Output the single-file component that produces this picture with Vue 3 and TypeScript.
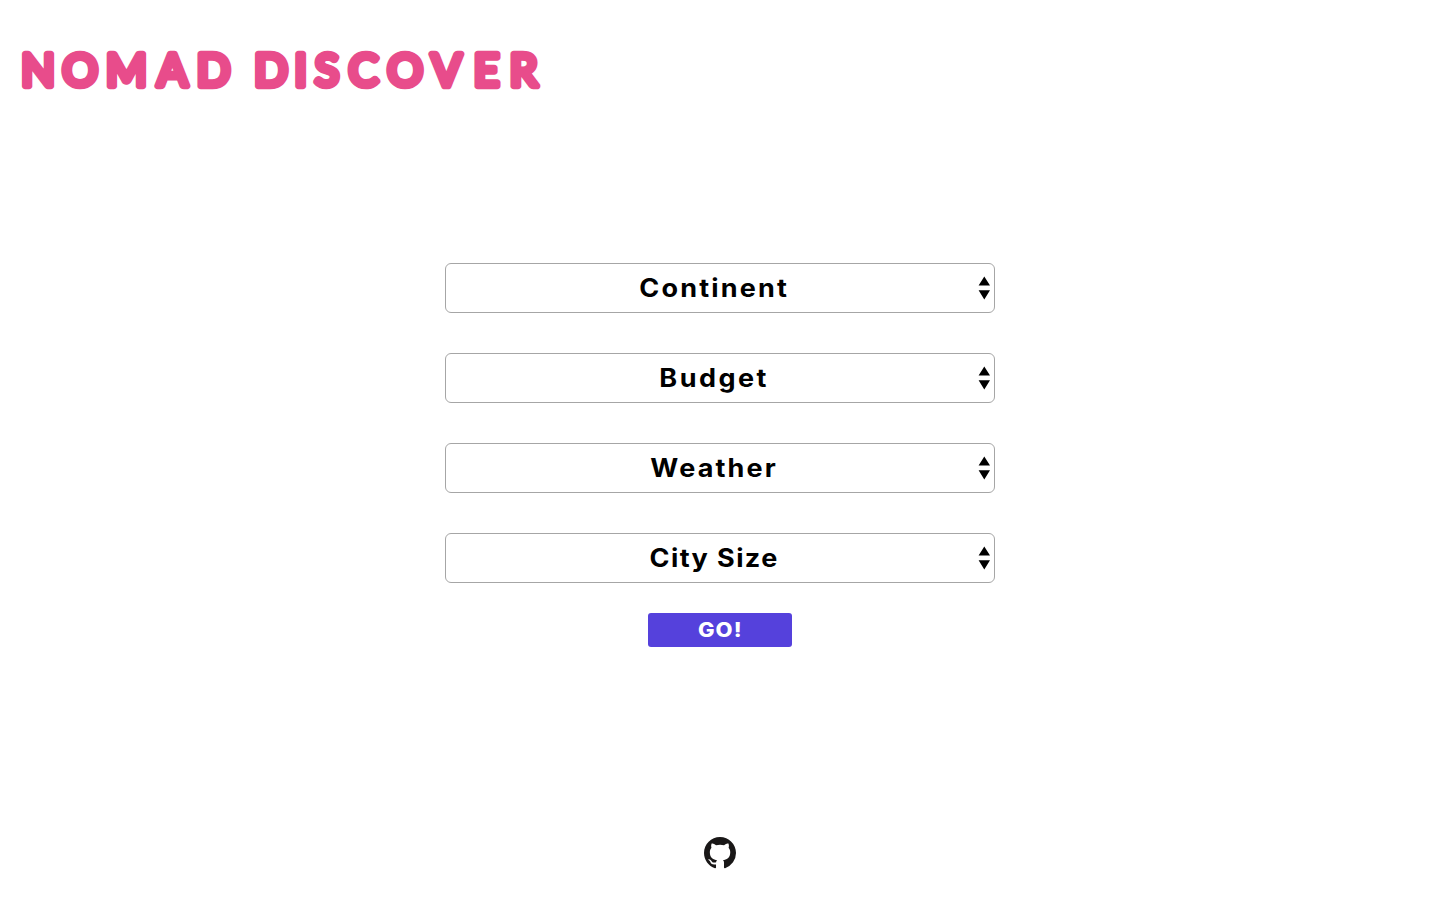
<script setup lang="ts">
interface Field {
  id: string
  label: string
}

const fields: Field[] = [
  { id: 'continent', label: 'Continent' },
  { id: 'budget', label: 'Budget' },
  { id: 'weather', label: 'Weather' },
  { id: 'size', label: 'City Size' },
]

// Optical centre of each letter in the wordmark
const letterCentres = [38, 80.2, 126.5, 172.5, 213.5, 243, 271, 300.7, 327, 363.5, 405, 446.5, 486.5, 523.5].join(' ')
</script>

<template>
  <div class="page">
    <header class="header">
      <svg class="wordmark" width="560" height="140" viewBox="0 0 560 140">
        <text :x="letterCentres" y="85.8" text-anchor="middle">NOMAD DISCOVER</text>
      </svg>
    </header>

    <main class="filters">
      <button v-for="field in fields" :key="field.id" class="field" type="button">
        <span class="label" :class="field.id">{{ field.label }}</span>
        <svg class="arrows" width="12" height="24" viewBox="0 0 12 24">
          <path d="M6.3 .5 12 9.5H.6zM6.3 23.5.6 14.2H12z" />
        </svg>
      </button>
      <button class="go" type="button"><span class="go-label">GO!</span></button>
    </main>

    <footer class="footer">
      <svg width="32" height="32" viewBox="0 0 16 16" fill="#191717">
        <path d="M8 0C3.58 0 0 3.58 0 8c0 3.54 2.29 6.53 5.47 7.59.4.07.55-.17.55-.38 0-.19-.01-.82-.01-1.49-2.01.37-2.53-.49-2.69-.94-.09-.23-.48-.94-.82-1.13-.28-.15-.68-.52-.01-.53.63-.01 1.08.58 1.23.82.72 1.21 1.87.87 2.33.66.07-.52.28-.87.51-1.07-1.78-.2-3.64-.89-3.64-3.95 0-.87.31-1.59.82-2.15-.08-.2-.36-1.02.08-2.12 0 0 .67-.21 2.2.82.64-.18 1.32-.27 2-.27s1.36.09 2 .27c1.53-1.04 2.2-.82 2.2-.82.44 1.1.16 1.92.08 2.12.51.56.82 1.27.82 2.15 0 3.07-1.87 3.75-3.65 3.95.29.25.54.73.54 1.48 0 1.07-.01 1.93-.01 2.2 0 .21.15.46.55.38A8.01 8.01 0 0 0 16 8c0-4.42-3.58-8-8-8z" />
      </svg>
    </footer>
  </div>
</template>

<style>
body {
  background: #fff;
}
</style>

<style scoped>
.page {
  box-sizing: border-box;
  display: flex;
  flex-direction: column;
  height: 900px;
  overflow: hidden;
  font-family: Inter, "Liberation Sans", sans-serif;
}

.header {
  height: 263px;
}

.wordmark {
  display: block;
}

.wordmark text {
  font-family: Lato, Inter, sans-serif;
  font-size: 44px;
  font-weight: 400;
  fill: #e84c8b;
  stroke: #e84c8b;
  stroke-width: 6.6px;
  stroke-linejoin: round;
}

.filters {
  display: flex;
  flex-direction: column;
  align-items: center;
  height: 574px;
}

.field {
  box-sizing: border-box;
  display: flex;
  align-items: center;
  width: 550px;
  height: 50px;
  margin: 0 0 40px;
  padding: 0 4px 0 0;
  border: 1px solid #a6a6a6;
  border-radius: 6px;
  background: #fff;
  color: #000;
  font: 700 25px/30px Inter, "Liberation Sans", sans-serif;
}

.label {
  flex: 1;
  text-align: center;
  letter-spacing: 2px;
  padding-left: 4px;
  transform: scaleX(1.08);
}

.label.budget {
  letter-spacing: 2.3px;
}

.label.size {
  letter-spacing: 1.3px;
}

.go {
  width: 144px;
  height: 34px;
  margin-top: -10px;
  padding: 0;
  border: 0;
  border-radius: 3px;
  background: #5541dc;
  color: #fff;
  font: 800 20px/34px Inter, "Liberation Sans", sans-serif;
  letter-spacing: 1px;
}

.go-label {
  display: inline-block;
  transform: scaleX(1.1);
}

.footer {
  display: flex;
  justify-content: center;
}
</style>
